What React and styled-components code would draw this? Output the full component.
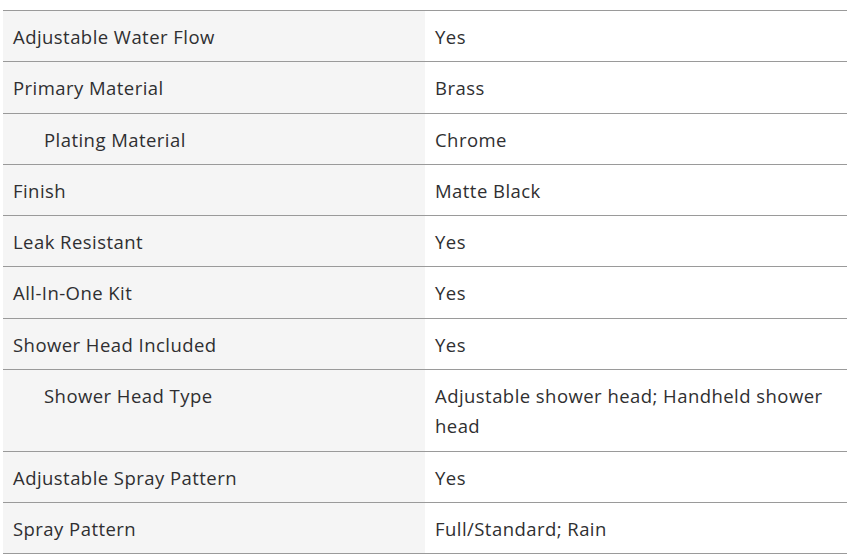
import React from "react";
import styled, { createGlobalStyle } from "styled-components";

const Global = createGlobalStyle`
  html, body { margin: 0; padding: 0; background: #fff; }
  body { font-family: "Open Sans", Lato, sans-serif; }
`;

const Wrap = styled.div`
  padding: 10px 20px 0 3px;
`;

const Table = styled.div`
  width: 844px;
  display: grid;
  grid-template-columns: 422px 422px;
  border-bottom: 1px solid #9a9a9a;
`;

const Cell = styled.div`
  border-top: 1px solid #9a9a9a;
  padding: 11px 10px 9px ${(p) => (p.$indent ? 41 : 10)}px;
  background: ${(p) => (p.$label ? "#f5f5f5" : "#fff")};
  font-size: 18.5px;
  line-height: 30.3px;
  letter-spacing: 0.45px;
  color: #2f2f31;
`;

const rows = [
  ["Adjustable Water Flow", "Yes"],
  ["Primary Material", "Brass"],
  ["Plating Material", "Chrome", true],
  ["Finish", "Matte Black"],
  ["Leak Resistant", "Yes"],
  ["All-In-One Kit", "Yes"],
  ["Shower Head Included", "Yes"],
  ["Shower Head Type", "Adjustable shower head; Handheld shower head", true],
  ["Adjustable Spray Pattern", "Yes"],
  ["Spray Pattern", "Full/Standard; Rain"],
];

export default function App() {
  return (
    <Wrap>
      <Global />
      <Table>
        {rows.map(([k, v, indent]) => (
          <React.Fragment key={k}>
            <Cell $label $indent={indent}>{k}</Cell>
            <Cell>{v}</Cell>
          </React.Fragment>
        ))}
      </Table>
    </Wrap>
  );
}
